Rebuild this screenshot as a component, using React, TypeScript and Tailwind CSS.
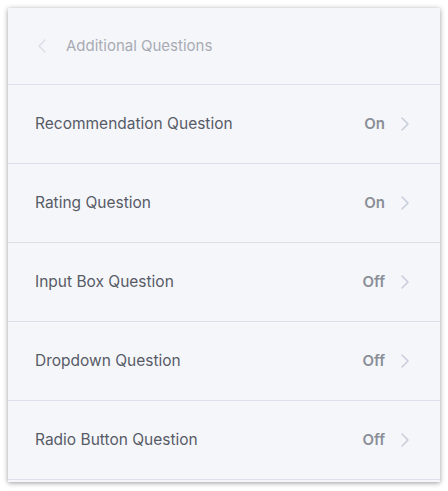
import { ChevronLeft, ChevronRight } from "lucide-react";

const rows = [
  { label: "Recommendation Question", value: "On" },
  { label: "Rating Question", value: "On" },
  { label: "Input Box Question", value: "Off" },
  { label: "Dropdown Question", value: "Off" },
  { label: "Radio Button Question", value: "Off" },
];

export default function App() {
  return (
    <div className="w-[448px] h-[491px] bg-white p-2 font-['Inter',sans-serif]">
      <div className="w-[432px] h-[474px] bg-[#f5f6fa] shadow-[0_1px_5px_rgba(0,0,0,0.4)] flex flex-col">
        <div className="h-[77px] shrink-0 flex items-center gap-[12px] pl-[22px] border-b border-[#dfe1ec]">
          <ChevronLeft size={24} strokeWidth={1.6} className="text-[#dcdfe8]" />
          <span className="text-[15px] text-[#a8abb3]">Additional Questions</span>
        </div>
        {rows.map((row) => (
          <div
            key={row.label}
            className="h-[79px] shrink-0 flex items-center justify-between pl-[27px] pr-[23px] border-b border-[#dcdfe9]"
          >
            <span className="text-[15.5px] text-[#575b66]">{row.label}</span>
            <div className="flex items-center gap-[8px]">
              <span className="text-[15px] font-semibold text-[#8a8e97]">{row.value}</span>
              <ChevronRight size={24} strokeWidth={1.6} className="text-[#c9cddb]" />
            </div>
          </div>
        ))}
      </div>
    </div>
  );
}
